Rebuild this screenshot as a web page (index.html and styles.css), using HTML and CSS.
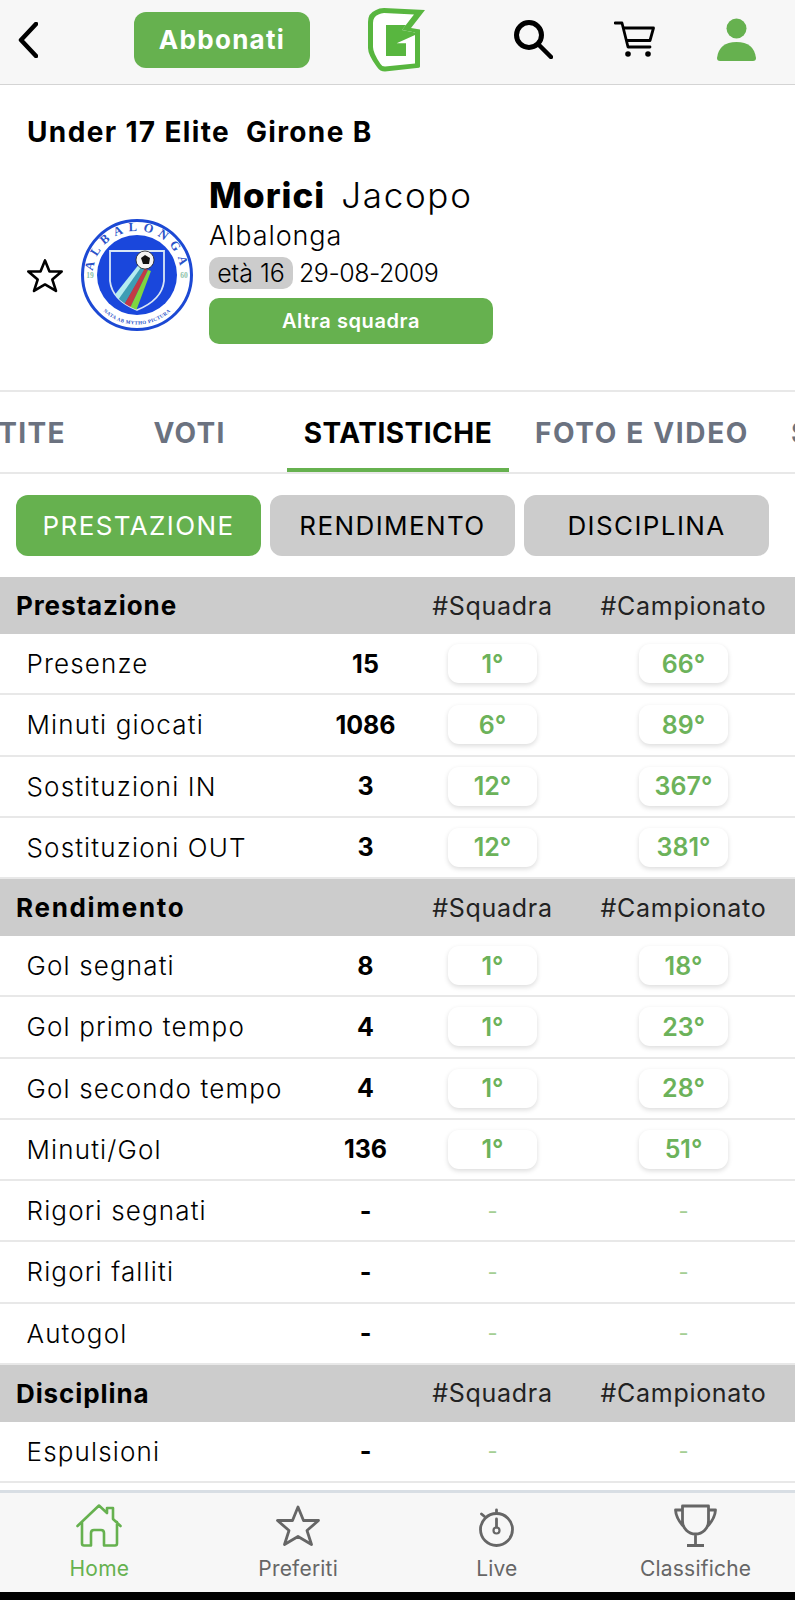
FILE: index.html
```html
<!DOCTYPE html>
<html lang="it">
<head>
<meta charset="utf-8">
<title>Morici Jacopo</title>
<link rel="stylesheet" href="styles.css">
</head>
<body>
<div class="app">
  <header class="topbar">
    <svg class="ic-back" viewBox="0 0 20 36"><path d="M18 2 L3 18 L18 34" fill="none" stroke="#000" stroke-width="4.500" stroke-linecap="round" stroke-linejoin="round"/></svg>
    <div class="subscribe">Abbonati</div>
    <svg class="ic-logo" viewBox="0 0 58 64">
      <path d="M57 2 L43 20 L52 21.500 L52 58.500 Q52 59.500 51 59.800 L17 63.500 Q12 63.500 9 59 Q0 47 0 40 L0 14 Q0 5 8 2 Q11 0 16 0 Z" fill="#58b63f"/>
      <path d="M46 6.500 L34 22 L47 24.500 L47 55.500 L17 58.500 Q14 58.500 12.500 56 Q5 45 5 39 L5 15 Q5 8.500 10.500 6.500 Q13 5 16 5 Z" fill="#fff"/>
      <path d="M18 17 L38 17 L34 22 L47 24.500 L47 27 L28.700 35.300 L38 35.300 L38 48 L18 48 Z" fill="#58b63f"/>
    </svg>
    <svg class="ic-search" viewBox="0 0 39 39"><circle cx="15" cy="15" r="12.500" fill="none" stroke="#000" stroke-width="5"/><path d="M24 24 L37 37" stroke="#000" stroke-width="4.500" stroke-linecap="round"/></svg>
    <svg class="ic-cart" viewBox="0 0 41 37"><path d="M1 2 H8 L14 26 H36" fill="none" stroke="#000" stroke-width="2.800" stroke-linecap="round" stroke-linejoin="round"/><path d="M9.500 7 H39.500 L36 19.500 H12" fill="none" stroke="#000" stroke-width="2.800" stroke-linejoin="round"/><circle cx="14" cy="33" r="2.800"/><circle cx="34" cy="33" r="2.800"/></svg>
    <svg class="ic-user" viewBox="0 0 39 43"><circle cx="19.500" cy="10.500" r="10" fill="#66b14f"/><path d="M0 40 Q2 24 19.500 24 Q37 24 39 40 Q39 43 36 43 L3 43 Q0 43 0 40 Z" fill="#66b14f"/></svg>
  </header>

  <main class="content">
    <section class="profile">
      <h1 class="league">Under 17 Elite&nbsp; Girone B</h1>
      <div class="player">
        <svg class="ic-fav" viewBox="0 0 46 43"><path d="M23 3 L28.500 16.500 L43.500 16.500 L32 26.500 L36.500 40.500 L23 32.500 L9.500 40.500 L14 26.500 L2.500 16.500 L17.500 16.500 Z" fill="none" stroke="#000" stroke-width="3.200" stroke-linejoin="round"/></svg>
        <svg class="crest" viewBox="-56 -56 112 112">
          <defs>
            <path id="arcTop" d="M-44 0 A44 44 0 0 1 44 0"/>
            <path id="arcBottom" d="M-49.500 0 A49.500 49.500 0 0 0 49.500 0"/>
            <clipPath id="shieldClip"><path d="M-27 -24 H27 V6 Q25 25 0 35 Q-25 25 -27 6 Z"/></clipPath>
          </defs>
          <circle r="54.500" fill="#fff" stroke="#1c49d4" stroke-width="3"/>
          <circle r="40" fill="#1a47dc"/>
          <path d="M-27 -24 H27 V6 Q25 25 0 35 Q-25 25 -27 6 Z" fill="#1a47dc" stroke="#d9e6f5" stroke-width="1.800"/>
          <g clip-path="url(#shieldClip)">
            <path d="M3 -12 L-24 22 L-18 27 L6 -8 Z" fill="#b5ecf0"/>
            <path d="M5 -9 L-19 25 L-13 30 L8 -6 Z" fill="#3d9db5"/>
            <path d="M8 -7 L-13 30 L-7 33 L11 -5 Z" fill="#c23a45"/>
            <path d="M11 -5 L-7 33 L-1 36 L14 -4 Z" fill="#7fd63f"/>
          </g>
          <circle cx="8" cy="-15" r="9" fill="#f4f4f4" stroke="#222" stroke-width="0.800"/>
          <path d="M8 -20 L13 -17 L12 -11 L6 -11 L4 -17 Z" fill="#111"/>
          <text class="crest-top"><textPath href="#arcTop" startOffset="50%" text-anchor="middle">ALBALONGA</textPath></text>
          <text class="crest-bottom"><textPath href="#arcBottom" startOffset="50%" text-anchor="middle">NATA AB MYTHO PICTURA</textPath></text>
          <text class="crest-year" x="-47" y="3" text-anchor="middle">19</text>
          <text class="crest-year" x="47" y="3" text-anchor="middle">60</text>
        </svg>
        <div class="player-info">
          <div class="player-name"><b>Morici</b><span>Jacopo</span></div>
          <div class="player-team">Albalonga</div>
          <div class="player-age"><span class="age-chip">età 16</span><span class="birth">29-08-2009</span></div>
          <div class="other-team">Altra squadra</div>
        </div>
      </div>
    </section>

    <nav class="tabs">
      <div class="tab">PARTITE</div>
      <div class="tab">VOTI</div>
      <div class="tab tab-active">STATISTICHE</div>
      <div class="tab tab-media">FOTO E VIDEO</div>
      <div class="tab tab-last">SCHEDA</div>
    </nav>

    <div class="pills">
      <div class="pill pill-on">PRESTAZIONE</div>
      <div class="pill">RENDIMENTO</div>
      <div class="pill">DISCIPLINA</div>
    </div>

    <div class="table">
      <div class="head"><b>Prestazione</b><span></span><span>#Squadra</span><span>#Campionato</span></div>
      <div class="row"><span class="label">Presenze</span><b>15</b><span><i class="rank">1°</i></span><span><i class="rank">66°</i></span></div>
      <div class="row"><span class="label">Minuti giocati</span><b>1086</b><span><i class="rank">6°</i></span><span><i class="rank">89°</i></span></div>
      <div class="row"><span class="label">Sostituzioni IN</span><b>3</b><span><i class="rank">12°</i></span><span><i class="rank">367°</i></span></div>
      <div class="row"><span class="label">Sostituzioni OUT</span><b>3</b><span><i class="rank">12°</i></span><span><i class="rank">381°</i></span></div>

      <div class="head"><b class="head-wide">Rendimento</b><span></span><span>#Squadra</span><span>#Campionato</span></div>
      <div class="row"><span class="label">Gol segnati</span><b>8</b><span><i class="rank">1°</i></span><span><i class="rank">18°</i></span></div>
      <div class="row"><span class="label">Gol primo tempo</span><b>4</b><span><i class="rank">1°</i></span><span><i class="rank">23°</i></span></div>
      <div class="row"><span class="label">Gol secondo tempo</span><b>4</b><span><i class="rank">1°</i></span><span><i class="rank">28°</i></span></div>
      <div class="row"><span class="label">Minuti/Gol</span><b>136</b><span><i class="rank">1°</i></span><span><i class="rank">51°</i></span></div>
      <div class="row"><span class="label">Rigori segnati</span><b>-</b><span class="nil">-</span><span class="nil">-</span></div>
      <div class="row"><span class="label">Rigori falliti</span><b>-</b><span class="nil">-</span><span class="nil">-</span></div>
      <div class="row"><span class="label">Autogol</span><b>-</b><span class="nil">-</span><span class="nil">-</span></div>

      <div class="head"><b>Disciplina</b><span></span><span>#Squadra</span><span>#Campionato</span></div>
      <div class="row"><span class="label">Espulsioni</span><b>-</b><span class="nil">-</span><span class="nil">-</span></div>
    </div>
  </main>

  <footer class="bottom">
    <div class="nav nav-on">
      <svg class="nav-home" viewBox="0 0 46 43"><path d="M1.500 22 L23 1.500 L31 9 L31 4 L37 4 L37 15 L44.500 22 M6 18 L6 39.500 Q6 41.500 8 41.500 L15 41.500 L15 29 Q15 26 18 26 L25 26 Q28 26 28 29 L28 41.500 L39 41.500 Q41 41.500 41 39.500 L41 18" fill="none" stroke="#66b14f" stroke-width="2.600" stroke-linecap="round" stroke-linejoin="round"/></svg>
      <span>Home</span>
    </div>
    <div class="nav">
      <svg class="nav-star" viewBox="0 0 46 43"><path d="M23 3 L28.500 16.500 L43.500 16.500 L32 26.500 L36.500 40.500 L23 32.500 L9.500 40.500 L14 26.500 L2.500 16.500 L17.500 16.500 Z" fill="none" stroke="#666" stroke-width="2.800" stroke-linejoin="round"/></svg>
      <span>Preferiti</span>
    </div>
    <div class="nav">
      <svg class="nav-watch" viewBox="0 0 37 39"><circle cx="18.500" cy="21.500" r="16" fill="none" stroke="#666" stroke-width="2.800"/><path d="M18.500 2 V4 M3.500 6 L6.500 8.500 M18.500 11 V19" stroke="#666" stroke-width="2.800" stroke-linecap="round"/><circle cx="18.500" cy="22.500" r="3" fill="none" stroke="#666" stroke-width="2.200"/></svg>
      <span>Live</span>
    </div>
    <div class="nav">
      <svg class="nav-trophy" viewBox="0 0 43 43"><path d="M8.500 2 H34.500 V17 A13 13 0 0 1 8.500 17 Z M8.500 6 H1.500 Q2 15 11 24 M34.500 6 H41.500 Q41 15 32 24 M21.500 30 V41 M13 41.500 H30" fill="none" stroke="#666" stroke-width="2.800" stroke-linejoin="round"/></svg>
      <span>Classifiche</span>
    </div>
  </footer>
  <div class="sysbar"></div>
</div>
</body>
</html>
```

FILE: styles.css
```css
* { box-sizing: border-box; margin: 0; padding: 0; }
html, body { height: 100%; }
body { font-family: Inter, "Liberation Sans", sans-serif; color: #111; background: #fff; overflow: hidden; }
.app { display: flex; flex-direction: column; height: 1600px; width: 795px; overflow: hidden; }

/* top bar */
.topbar { flex: 0 0 85px; display: flex; align-items: center; background: #f7f7f7; border-bottom: 1px solid #d4d4d4; padding: 0 0 5px 18px; }
.ic-back { width: 20px; height: 36px; flex: none; }
.subscribe { margin-left: 96px; width: 176px; height: 56px; border-radius: 12px; background: #66b14f; color: #fff; font-size: 26px; font-weight: 700; letter-spacing: 1.300px; display: flex; align-items: center; justify-content: center; }
.ic-logo { margin-left: 58px; width: 58px; height: 64px; flex: none; }
.ic-search { margin-left: 88px; width: 39px; height: 39px; flex: none; }
.ic-cart { margin-left: 61px; width: 41px; height: 37px; flex: none; }
.ic-user { margin-left: 62px; width: 39px; height: 43px; flex: none; }

.content { flex: 1; min-height: 0; overflow: hidden; }

/* profile */
.profile { height: 305px; padding: 31px 0 0 26px; }
.league { font-size: 28px; line-height: 32px; font-weight: 700; letter-spacing: 1.350px; color: #000; margin-left: 1px; }
.player { display: flex; align-items: center; margin-top: 25px; }
.ic-fav { width: 38px; height: 35px; flex: none; margin-top: 34px; }
.crest { width: 112px; height: 112px; flex: none; margin: 32px 0 0 17px; }
.crest-top { font-family: "Liberation Serif", serif; font-size: 12.500px; font-weight: 700; fill: #2a52c8; letter-spacing: 5.500px; }
.crest-bottom { font-family: "Liberation Serif", serif; font-size: 5px; font-weight: 700; fill: #2a52c8; letter-spacing: .4px; }
.crest-year { font-family: "Liberation Serif", serif; font-size: 7.500px; font-weight: 700; fill: #8cc3a8; }
.player-info { margin-left: 16px; display: flex; flex-direction: column; }
.player-name { display: flex; align-items: baseline; gap: 16px; font-size: 35px; line-height: 44px; letter-spacing: 1px; color: #000; }
.player-name b { font-weight: 800; }
.player-name span { font-weight: 300; letter-spacing: 1.700px; }
.player-team { margin-top: 2px; font-size: 27px; line-height: 34px; font-weight: 300; letter-spacing: .9px; color: #000; }
.player-age { display: flex; align-items: center; gap: 6px; height: 34px; font-size: 26px; font-weight: 300; color: #000; margin-top: 3px; }
.age-chip { height: 32px; width: 84px; background: #ccc; border-radius: 10px; display: flex; align-items: center; justify-content: center; font-size: 25px; }
.birth { font-size: 25px; letter-spacing: -.5px; }
.other-team { margin-top: 8px; width: 284px; height: 46px; border-radius: 10px; background: #66b14f; color: #fff; font-size: 20px; font-weight: 600; letter-spacing: .6px; display: flex; align-items: center; justify-content: center; }

/* tabs */
.tabs { display: flex; gap: 8px; height: 84px; margin-left: -87px; border-top: 2px solid #e8e8e8; border-bottom: 2px solid #e8e8e8; width: 1400px; }
.tab { flex: 0 0 179px; display: flex; align-items: center; justify-content: center; font-size: 28px; font-weight: 700; letter-spacing: 1.300px; color: #6b7280; padding-top: 2px; white-space: nowrap; }
.tab-active { flex-basis: 222px; color: #000; letter-spacing: .5px; box-shadow: inset 0 -4px 0 #66b14f; }
.tab-media { flex-basis: 250px; letter-spacing: 1.650px; }
.tab-last { flex: 0 0 auto; padding-left: 16px; }

/* pills */
.pills { display: grid; grid-template-columns: repeat(3, 245px); gap: 9px; padding: 21px 0 21px 16px; }
.pill { height: 61px; border-radius: 12px; background: #ccc; color: #000; font-size: 26px; font-weight: 400; letter-spacing: 1.400px; display: flex; align-items: center; justify-content: center; }
.pill-on { background: #66b14f; color: #fff; }

/* table */
.head, .row { display: grid; grid-template-columns: 318px 95px 159px 223px; align-items: center; }
.head { height: 57px; background: #ccc; padding: 0; font-size: 25px; color: #222; }
.head b { padding-left: 16px; font-weight: 700; font-size: 26px; letter-spacing: .9px; color: #000; }
.head b.head-wide { letter-spacing: 1.700px; }
.head span { text-align: center; letter-spacing: .7px; }
.row { height: 61.250px; border-bottom: 2px solid #e8e8e8; font-size: 26px; }
.label { padding-left: 26.500px; font-weight: 300; letter-spacing: 1.150px; color: #000; }
.row b { text-align: center; font-weight: 700; font-size: 25px; color: #000; }
.row > span:not(.label) { display: flex; justify-content: center; }
.rank { width: 89px; height: 39px; border-radius: 11px; background: #fff; box-shadow: 0 2px 5px rgba(0,0,0,.14); color: #6cb25a; font-style: normal; font-weight: 600; font-size: 25px; display: flex; align-items: center; justify-content: center; }
.nil { color: #a4cf94; font-size: 22px; }

/* bottom nav */
.bottom { flex: 0 0 102px; display: grid; grid-template-columns: repeat(4, 1fr); background: #f7f7f7; border-top: 3px solid #d8dee4; }
.nav { display: flex; flex-direction: column; align-items: center; justify-content: flex-end; color: #666; font-size: 21px; letter-spacing: .2px; line-height: 24px; padding-bottom: 11px; gap: 10px; }
.nav-on { color: #66b14f; }
.nav svg { flex: none; }
.nav-home, .nav-star { width: 46px; height: 43px; }
.nav-watch { width: 37px; height: 39px; margin-top: 4px; }
.nav-trophy { width: 43px; height: 43px; }
.sysbar { flex: 0 0 8px; background: #000; }
```
